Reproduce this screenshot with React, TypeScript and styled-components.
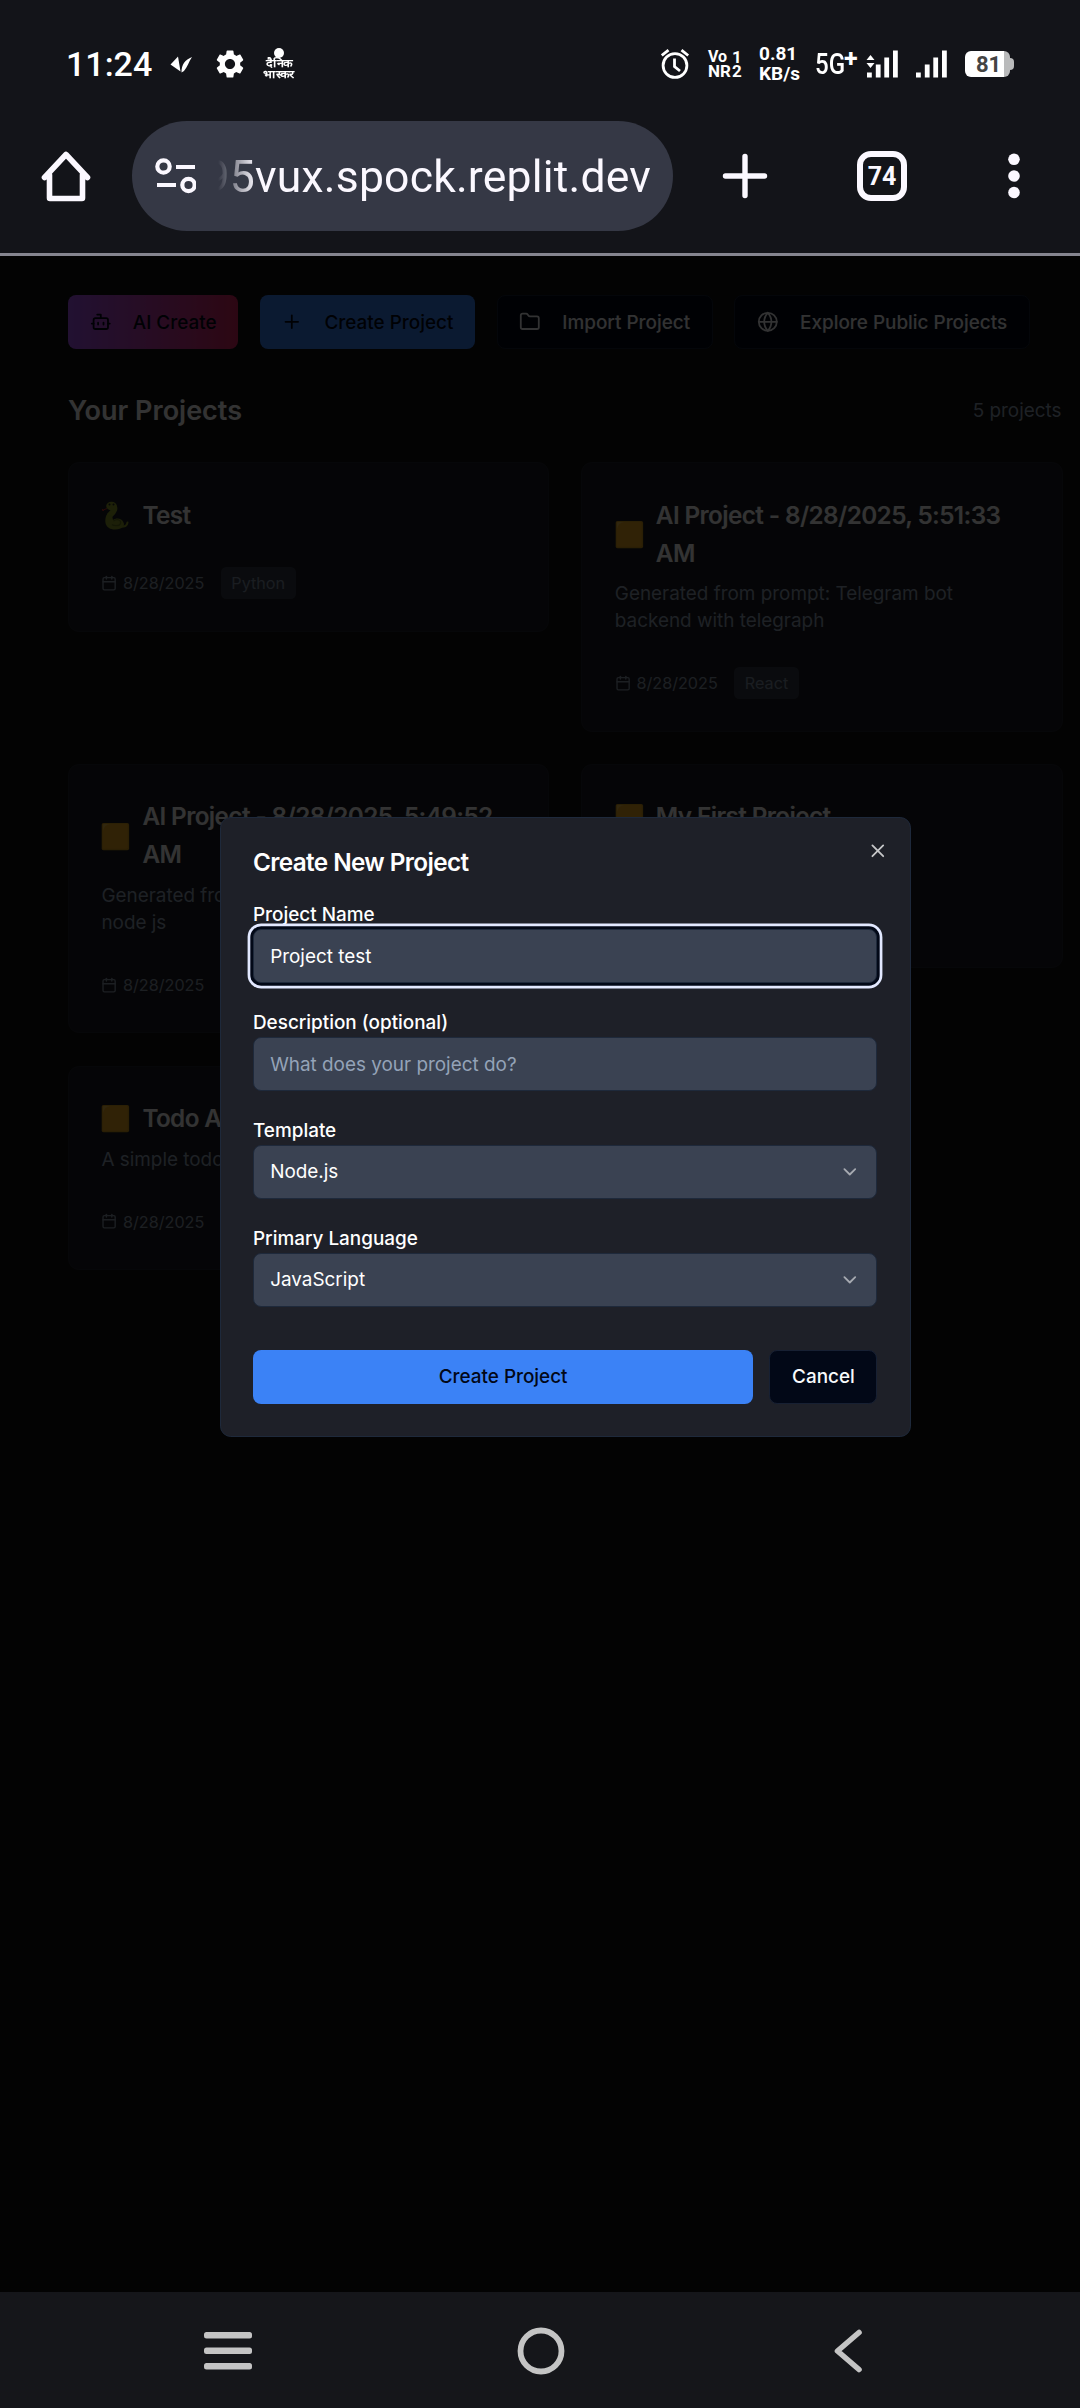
import React from 'react';
import styled, { createGlobalStyle } from 'styled-components';
import { Bot, Calendar, ChevronDown, Folder, Globe, Plus, X } from 'lucide-react';

/* The web page is shown at 135% of its CSS size. */
const SCALE = 1.35;
const u = (n: number) => `${+(n * SCALE).toFixed(3)}px`;
const ICON = 16 * SCALE;

const GlobalStyle = createGlobalStyle`
  *, *::before, *::after { box-sizing: border-box; }
  html, body { margin: 0; padding: 0; background: #000; }
  body { font-family: Inter, Roboto, sans-serif; }
  h1, h2, h3, p { margin: 0; }
  svg { display: block; flex: none; }
`;

const Screen = styled.div`
  width: 1080px;
  height: 2408px;
  display: flex;
  flex-direction: column;
  overflow: hidden;
`;

/* ---------- Phone status bar ---------- */

const StatusBar = styled.div`
  height: 121px;
  flex: none;
  display: flex;
  justify-content: space-between;
  align-items: flex-start;
  padding: 36px 65px 0 66px;
  background: #131419;
  color: #fff;
  font-family: Roboto, sans-serif;
`;

const StatusGroup = styled.div`
  height: 56px;
  display: flex;
  align-items: center;
`;

const Slot = styled.div<{ $w: number; $gap?: number }>`
  width: ${(p) => p.$w}px;
  margin-left: ${(p) => p.$gap ?? 0}px;
  flex: none;
  white-space: nowrap;
`;

const Clock = styled(Slot)`
  font-size: 34px;
  font-weight: 500;
  line-height: 54px;
`;

const NewsMark = styled(Slot)`
  display: flex;
  flex-direction: column;
  align-items: center;
  font-size: 11px;
  font-weight: 900;
  line-height: 10.5px;
`;

const NewsLine = styled.span`
  transform: scaleX(1.14);
`;

const NewsDot = styled.span`
  width: 10px;
  height: 10px;
  margin-bottom: 1px;
  border-radius: 50%;
  background: #fff;
`;

const Volte = styled(Slot)`
  display: grid;
  grid-template-columns: 24px 10px;
  line-height: 14px;
  font-size: 17px;
  font-weight: 700;
`;

const VolteMark = styled.span`
  font-size: 16px;
`;

const Speed = styled(Slot)`
  font-size: 19px;
  font-weight: 700;
  line-height: 20px;
`;

const Network = styled(Slot)`
  display: flex;
  line-height: 34px;
`;

const NetworkLabel = styled.span`
  width: 29px;
  font-size: 29px;
  font-weight: 500;
  transform: scaleX(0.83);
  transform-origin: left;
`;

const NetworkPlus = styled.span`
  font-size: 25px;
  font-weight: 700;
  line-height: 24px;
`;

const Battery = styled(Slot)`
  display: flex;
  align-items: center;
`;

const BatteryBody = styled.div`
  width: 45px;
  height: 26px;
  padding-left: 2px;
  border-radius: 6px;
  background: linear-gradient(90deg, #fff 39px, #b9babb 39px);
  color: #444;
  font-size: 22px;
  font-weight: 700;
  line-height: 27px;
  text-align: center;
`;

const BatteryNub = styled.div`
  width: 4px;
  height: 12px;
  border-radius: 0 4px 4px 0;
  background: #b9babb;
`;

/* ---------- Browser toolbar ---------- */

const Toolbar = styled.div`
  height: 135px;
  flex: none;
  display: flex;
  align-items: flex-start;
  background: #131419;
  border-bottom: 3px solid #85858f;
`;

const ToolSlot = styled.div<{ $w: number }>`
  width: ${(p) => p.$w}px;
  height: 110px;
  flex: none;
  display: flex;
  align-items: center;
  justify-content: center;
`;

const AddressBar = styled.div`
  width: 541px;
  height: 110px;
  flex: none;
  display: flex;
  align-items: center;
  padding: 0 22px 0 22px;
  border-radius: 55px;
  background: #353845;
`;

const Url = styled.div`
  flex: 1;
  height: 60px;
  margin-left: 22px;
  overflow: hidden;
  display: flex;
  justify-content: flex-end;
  color: #fbf8ff;
  font-family: Roboto, sans-serif;
  font-size: 44.5px;
  line-height: 62px;
  letter-spacing: 0.2px;
  white-space: nowrap;
  mask-image: linear-gradient(90deg, transparent 0, #000 38px);
`;

const TabCount = styled.div`
  width: 50px;
  height: 50px;
  border: 6px solid #fbf8ff;
  border-radius: 14px;
  color: #fbf8ff;
  font-family: Roboto, sans-serif;
  font-size: 25px;
  font-weight: 700;
  line-height: 39px;
  text-align: center;
`;

/* ---------- Web page ---------- */

const Page = styled.main`
  position: relative;
  flex: 1;
  min-height: 0;
  padding: 39px 17.5px 0 68px;
  background: #0f0f0f;
  color: #fff;
`;

const Actions = styled.div`
  display: flex;
  gap: ${u(16)};
`;

type Variant = 'gradient' | 'primary' | 'outline';

const Button = styled.button<{ $variant: Variant; $grow?: boolean }>`
  height: ${u(40)};
  flex: ${(p) => (p.$grow ? '1' : 'none')};
  display: flex;
  align-items: center;
  justify-content: center;
  gap: ${u(16)};
  padding: 0 ${u(16)};
  border: ${(p) => (p.$variant === 'outline' ? '1.35px solid #172033' : '0')};
  border-radius: ${u(6)};
  background: ${(p) =>
    p.$variant === 'gradient'
      ? 'linear-gradient(90deg, #a855f7, #dc2660)'
      : p.$variant === 'primary'
        ? '#3b82f6'
        : '#020817'};
  color: ${(p) => (p.$variant === 'outline' ? '#f8fafc' : '#020817')};
  font-family: inherit;
  font-size: ${u(14)};
  font-weight: 500;
  white-space: nowrap;
`;

const SectionHead = styled.div`
  display: flex;
  align-items: center;
  justify-content: space-between;
  height: ${u(28)};
  margin: 42.6px 0 33px;
`;

const SectionTitle = styled.h2`
  font-size: ${u(20)};
  font-weight: 600;
`;

const Count = styled.span`
  padding-right: 1px;
  font-size: ${u(14)};
  color: #94a3b8;
`;

const Grid = styled.div`
  display: grid;
  grid-template-columns: 1fr 1fr;
  gap: ${u(24)};
  align-items: start;
`;

const Card = styled.article`
  padding: 33.4px ${u(24)} 31.4px;
  border: 1.35px solid #22252f;
  border-radius: ${u(8)};
  background: #1b1d24;
`;

const CardHead = styled.div`
  display: flex;
  align-items: center;
  gap: 12px;
`;

const CardTitle = styled.h3`
  font-size: ${u(18)};
  font-weight: 600;
  line-height: ${u(28)};
  letter-spacing: -0.025em;
`;

const CardText = styled.p`
  margin-top: ${u(6)};
  max-width: 400px;
  font-size: ${u(14)};
  line-height: ${u(20)};
  color: #94a3b8;
`;

const Meta = styled.div`
  display: flex;
  align-items: center;
  gap: ${u(4)};
  height: ${u(24)};
  margin-top: ${u(24)};
  font-size: ${u(12)};
  color: #8e9aab;
`;

const Badge = styled.span`
  margin-left: ${u(8)};
  padding: 0 ${u(8)};
  border-radius: ${u(4)};
  background: #343b49;
  color: #8390a4;
  line-height: ${u(24)};
`;

/* ---------- Dialog ---------- */

const Overlay = styled.div`
  position: absolute;
  inset: 0;
  background: rgba(0, 0, 0, 0.8);
`;

const Dialog = styled.section`
  position: absolute;
  left: 219.6px;
  top: 561px;
  width: ${u(512)};
  padding: ${u(24)};
  border: 1.35px solid #1e293b;
  border-radius: ${u(8)};
  background: #1e2028;
  color: #fff;
`;

const DialogTitle = styled.h1`
  margin-bottom: ${u(16)};
  font-size: ${u(18)};
  font-weight: 600;
  line-height: ${u(18)};
  letter-spacing: -0.025em;
`;

const Close = styled.span`
  position: absolute;
  right: ${u(16)};
  top: ${u(16)};
  opacity: 0.75;
`;

const Form = styled.div`
  display: flex;
  flex-direction: column;
  gap: ${u(16)};
`;

const Field = styled.label`
  display: block;
  padding-top: 6px;
  font-size: ${u(14)};
  font-weight: 500;
  line-height: 26.4px;
`;

const Input = styled.input`
  position: relative;
  display: block;
  width: 100%;
  height: ${u(40)};
  padding: 1px ${u(12)} 0;
  border: 1.35px solid #1e293b;
  border-radius: ${u(6)};
  background: #3a4252;
  color: #fff;
  font-family: inherit;
  font-size: ${u(14)};
  outline: none;

  &::placeholder {
    color: #94a3b8;
  }
`;

const FocusedInput = styled(Input)`
  box-shadow: 0 0 0 ${u(2)} #020817, 0 0 0 ${u(4)} #e2e8ff;
`;

const Select = styled.div`
  display: flex;
  align-items: center;
  justify-content: space-between;
  height: ${u(40)};
  padding: 1px ${u(12)} 0;
  border: 1.35px solid #1e293b;
  border-radius: ${u(6)};
  background: #3a4252;
  font-weight: 400;

  svg {
    opacity: 0.55;
  }
`;

const DialogActions = styled.div`
  display: flex;
  gap: ${u(12)};
  margin-top: ${u(16)};
`;

/* ---------- Phone navigation ---------- */

const NavBar = styled.nav`
  height: 116px;
  flex: none;
  display: grid;
  grid-template-columns: 48px 48px 30px;
  column-gap: 264.5px;
  align-items: center;
  padding: 1px 0 0 204px;
  background: #15161a;
`;

const BackSlot = styled.div`
  padding-left: 4px;
`;

/* ---------- Icons ---------- */

const Bird = () => (
  <svg width="22" height="17" viewBox="0 0 22 17" fill="#fff">
    <path d="M8 0.5 0.5 8.5 10.5 15.5Z" />
    <path d="M22 1C15 4 11.5 8 11.5 16.5L14 15C17.500 11 18.500 6 22 1Z" />
  </svg>
);

const Gear = () => (
  <svg width="34" height="34" viewBox="0 0 24 24" fill="#fff">
    <path d="M19.140 12.940c.04-.3.06-.61.06-.94 0-.32-.02-.64-.07-.94l2.030-1.580c.18-.14.23-.41.12-.61l-1.920-3.320c-.12-.22-.37-.29-.59-.22l-2.390.96c-.5-.38-1.030-.7-1.620-.94L14.400 2.810c-.04-.24-.24-.41-.48-.41h-3.840c-.24 0-.43.17-.47.41L9.250 5.350c-.59.24-1.130.57-1.620.94l-2.390-.96c-.22-.08-.47 0-.59.22L2.740 8.870c-.12.21-.08.47.12.61l2.030 1.580c-.05.3-.09.63-.09.94s.02.64.07.94l-2.030 1.580c-.18.14-.23.41-.12.61l1.920 3.320c.12.22.37.29.59.22l2.390-.96c.5.38 1.030.7 1.620.94l.36 2.540c.05.24.24.41.48.41h3.840c.24 0 .44-.17.47-.41l.36-2.540c.59-.24 1.130-.56 1.620-.94l2.390.96c.22.08.47 0 .59-.22l1.920-3.320c.12-.22.07-.47-.12-.61l-2.010-1.580zM12 15.600c-1.980 0-3.600-1.620-3.600-3.600s1.620-3.600 3.600-3.600 3.600 1.620 3.600 3.600-1.620 3.600-3.600 3.600z" />
  </svg>
);

const Alarm = () => (
  <svg width="29" height="30" viewBox="0 0 29 30" fill="none" stroke="#fff" strokeWidth="2.800">
    <circle cx="14" cy="16.500" r="11.900" />
    <path d="M13.500 9.500v8l5.500 4.500M0.800 6.500 7.500 1.200M27.200 6.500 20.500 1.200" />
  </svg>
);

const Signal = ({ data }: { data?: boolean }) => (
  <svg width="33" height="28" viewBox="0 0 33 28" fill="#fff">
    {data && <path d="M4.500 5 8.500 10H.5ZM.5 13H8.500L4.500 18Z" />}
    <path d="M1 22.500H5.800V27.500H1ZM9.800 14.500H14.600V27.500H9.800ZM18.300 7.500H23.100V27.500H18.300ZM27 0.500H31.800V27.500H27Z" />
  </svg>
);

const Home = () => (
  <svg width="52" height="52" viewBox="0 0 52 52" fill="none" stroke="#fbf8ff" strokeWidth="5.600" strokeLinejoin="round" strokeLinecap="round">
    <path d="M4.500 27.500 26 4.500 47.500 27.500M9.500 25V48Q9.500 48.500 10 48.500H42Q42.500 48.500 42.500 48V25" />
  </svg>
);

const Tune = () => (
  <svg width="42" height="36" viewBox="0 0 42 36" fill="none" stroke="#fbf8ff" strokeWidth="4.200">
    <circle cx="9.500" cy="8.500" r="6.200" />
    <circle cx="34.500" cy="27" r="6.200" />
    <path d="M22 9H41M3 27H22" />
  </svg>
);

const NewTab = () => (
  <svg width="46" height="46" viewBox="0 0 46 46" stroke="#fbf8ff" strokeWidth="5.400" strokeLinecap="round">
    <path d="M23 3.500V42.500M3.500 23H42.500" />
  </svg>
);

const Dots = () => (
  <svg width="12" height="46" viewBox="0 0 12 46" fill="#fbf8ff">
    <circle cx="6" cy="6.300" r="5.800" />
    <circle cx="6" cy="23" r="5.800" />
    <circle cx="6" cy="39.500" r="5.800" />
  </svg>
);

const Snake = () => (
  <svg width="29" height="29" viewBox="0 0 29 29" fill="none">
    <path d="M6 7.500 1 9.500M1 8 3 10" stroke="#c4302b" strokeWidth="1" />
    <path d="M20 25c4 1.500 6-.5 6.500-3.500" stroke="#8a9a2a" strokeWidth="2" strokeLinecap="round" />
    <path d="M10.500 5c5.500 1 2 6-1.500 9" stroke="#8f9f2c" strokeWidth="6" strokeLinecap="round" />
    <path d="M5.500 14C3 20 4 28.500 14 28.500c8 0 10-4 8.500-7C21 17 15 16.500 12 19L11 14Z" fill="#8a9a2a" />
    <ellipse cx="10.500" cy="5" rx="5.300" ry="4.300" fill="#8f9f2c" />
    <path d="M12.500 20c4-3 8-.5 7 2.500s-7 2.500-8.500 1" stroke="#65721c" strokeWidth="1.200" />
    <circle cx="8.500" cy="3.500" r="1" fill="#222" />
    <circle cx="12.500" cy="3.500" r="1" fill="#222" />
  </svg>
);

const Square = () => (
  <svg width="29" height="29" viewBox="0 0 29 29">
    <rect x="0.700" y="0.900" width="27.400" height="27.400" rx="1.800" fill="#d19a1c" />
    <rect x="1.600" y="1.800" width="25" height="25" rx="1.200" fill="#f0ac20" />
    <path d="M2 9V3q0-1 1-1h6Q3 3 2 9Z" fill="#f6c04c" />
  </svg>
);

const Menu = () => (
  <svg width="48" height="38" viewBox="0 0 48 38" fill="#c4c4c4">
    <rect y="0" width="48" height="6.600" rx="2.500" />
    <rect y="15.500" width="48" height="6.600" rx="2.500" />
    <rect y="31" width="48" height="6.600" rx="2.500" />
  </svg>
);

const Circle = () => (
  <svg width="48" height="48" viewBox="0 0 48 48" fill="none" stroke="#c4c4c4" strokeWidth="5.800">
    <circle cx="24" cy="24" r="20.500" />
  </svg>
);

const Back = () => (
  <svg width="30" height="46" viewBox="0 0 30 46" fill="none" stroke="#c4c4c4" strokeWidth="5.600" strokeLinecap="round" strokeLinejoin="round">
    <path d="M26 4.500 4.500 23 26 41.500" />
  </svg>
);

/* ---------- Data ---------- */

type Project = { title: string; text?: string; language: string; python?: boolean };

const projects: Project[] = [
  { title: 'Test', language: 'Python', python: true },
  {
    title: 'AI Project - 8/28/2025, 5:51:33 AM',
    text: 'Generated from prompt: Telegram bot backend with telegraph',
    language: 'React',
  },
  {
    title: 'AI Project - 8/28/2025, 5:49:52 AM',
    text: 'Generated from prompt: Telegram bot node\u00a0js',
    language: 'React',
  },
  { title: 'My First Project', text: 'A simple project', language: 'JavaScript' },
  { title: 'Todo App', text: 'A simple todo app', language: 'JavaScript' },
];

const ProjectCard = ({ title, text, language, python }: Project) => (
  <Card>
    <CardHead>
      {python ? <Snake /> : <Square />}
      <CardTitle>{title}</CardTitle>
    </CardHead>
    {text && <CardText>{text}</CardText>}
    <Meta>
      <Calendar size={12 * SCALE} />
      8/28/2025
      <Badge>{language}</Badge>
    </Meta>
  </Card>
);

export default function App() {
  return (
    <Screen>
      <GlobalStyle />
      <StatusBar>
        <StatusGroup>
          <Clock $w={86}>11:24</Clock>
          <Slot $w={22} $gap={18}><Bird /></Slot>
          <Slot $w={34} $gap={21}><Gear /></Slot>
          <NewsMark $w={30} $gap={17}>
            <NewsDot />
            <NewsLine>दैनिक</NewsLine>
            <NewsLine>भास्कर</NewsLine>
          </NewsMark>
        </StatusGroup>
        <StatusGroup>
          <Slot $w={29}><Alarm /></Slot>
          <Volte $w={34} $gap={18}>
            <VolteMark>Vo</VolteMark><span>1</span>
            <span>NR</span><span>2</span>
          </Volte>
          <Speed $w={40} $gap={17}>
            <div>0.81</div>
            <div>KB/s</div>
          </Speed>
          <Network $w={43} $gap={16}>
            <NetworkLabel>5G</NetworkLabel>
            <NetworkPlus>+</NetworkPlus>
          </Network>
          <Slot $w={33} $gap={8}><Signal data /></Slot>
          <Slot $w={33} $gap={16}><Signal /></Slot>
          <Battery $w={50} $gap={17}>
            <BatteryBody>81</BatteryBody>
            <BatteryNub />
          </Battery>
        </StatusGroup>
      </StatusBar>

      <Toolbar>
        <ToolSlot $w={132}><Home /></ToolSlot>
        <AddressBar>
          <Tune />
          <Url>95vux.spock.replit.dev</Url>
        </AddressBar>
        <ToolSlot $w={144}><NewTab /></ToolSlot>
        <ToolSlot $w={130}><TabCount>74</TabCount></ToolSlot>
        <ToolSlot $w={133}><Dots /></ToolSlot>
      </Toolbar>

      <Page>
        <Actions>
          <Button $variant="gradient"><Bot size={ICON} />AI Create</Button>
          <Button $variant="primary"><Plus size={ICON} />Create Project</Button>
          <Button $variant="outline"><Folder size={ICON} />Import Project</Button>
          <Button $variant="outline"><Globe size={ICON} />Explore Public Projects</Button>
        </Actions>
        <SectionHead>
          <SectionTitle>Your Projects</SectionTitle>
          <Count>5 projects</Count>
        </SectionHead>
        <Grid>
          {projects.map((p) => (
            <ProjectCard key={p.title} {...p} />
          ))}
        </Grid>

        <Overlay />
        <Dialog>
          <DialogTitle>Create New Project</DialogTitle>
          <Close><X size={ICON} /></Close>
          <Form>
            <Field>
              Project Name
              <FocusedInput defaultValue="Project test" />
            </Field>
            <Field>
              Description (optional)
              <Input placeholder="What does your project do?" />
            </Field>
            <Field as="div">
              Template
              <Select>Node.js<ChevronDown size={ICON} /></Select>
            </Field>
            <Field as="div">
              Primary Language
              <Select>JavaScript<ChevronDown size={ICON} /></Select>
            </Field>
            <DialogActions>
              <Button $variant="primary" $grow>Create Project</Button>
              <Button $variant="outline">Cancel</Button>
            </DialogActions>
          </Form>
        </Dialog>
      </Page>

      <NavBar>
        <Menu />
        <Circle />
        <BackSlot><Back /></BackSlot>
      </NavBar>
    </Screen>
  );
}
